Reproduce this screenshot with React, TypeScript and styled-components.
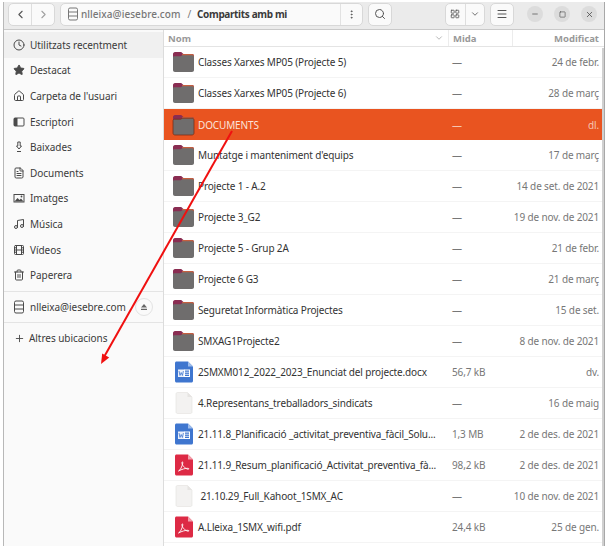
import styled, { createGlobalStyle } from "styled-components";
import {
  ChevronDown, ChevronLeft, ChevronRight, Clock, EllipsisVertical, FileText, Film, Home,
  LayoutGrid, Menu, Minus, Music, Plus, Search, Square, Star, Trash2, X,
} from "lucide-react";

const GlobalStyle = createGlobalStyle`
  html, body { margin: 0; padding: 0; background: #fff; }
  * { box-sizing: border-box; }
`;

const Page = styled.div`
  position: relative;
  width: 606px;
  height: 546px;
  overflow: hidden;
  padding: 2px 1px 0 3px;
  background: #fff;
  font-family: "Noto Sans", "Open Sans", sans-serif;
  font-size: 10px;
  letter-spacing: -0.14px;
  color: #333;
`;

const Win = styled.div`
  display: flex;
  flex-direction: column;
  height: 100%;
  border-left: 1px solid #b8b8b8;
  border-right: 1px solid #a8a8a8;
`;

const HeaderBar = styled.header`
  display: flex;
  align-items: center;
  height: 28px;
  flex-shrink: 0;
  padding: 0 0 3px 4px;
  gap: 5px;
  background: #ebebeb;
  border-bottom: 1px solid #c9c9c9;
`;

const ButtonGroup = styled.div<{ $w: number }>`
  display: flex;
  width: ${(p) => p.$w}px;
  height: 23px;
  flex-shrink: 0;
  background: #fafafa;
  border: 1px solid #d8d8d8;
  border-radius: 5px;
`;

const ToolButton = styled.div<{ $divider?: boolean; $muted?: boolean }>`
  flex: 1;
  display: flex;
  align-items: center;
  justify-content: center;
  color: ${(p) => (p.$muted ? "#a0a0a0" : "#555")};
  border-left: ${(p) => (p.$divider ? "1px solid #dedede" : "none")};
`;

const PathBar = styled.div`
  display: flex;
  align-items: center;
  width: 303px;
  height: 23px;
  flex-shrink: 0;
  background: #fafafa;
  border: 1px solid #d8d8d8;
  border-radius: 5px;
  padding-left: 6px;
`;

const Crumb = styled.span<{ $strong?: boolean }>`
  margin-left: ${(p) => (p.$strong ? "0" : "2px")};
  font-weight: ${(p) => (p.$strong ? 700 : 500)};
  color: ${(p) => (p.$strong ? "#3a3a3a" : "#777")};
  white-space: nowrap;
  font-size: 10px;
  letter-spacing: ${(p) => (p.$strong ? "-0.35px" : "0.05px")};
`;

const CrumbSep = styled.span`
  margin: 0 6px 0 7px;
  color: #777;
`;

const PathMenu = styled.div`
  margin-left: auto;
  width: 22px;
  height: 100%;
  display: flex;
  align-items: center;
  justify-content: center;
  color: #555;
  border-left: 1px solid #e2e2e2;
`;

const Spacer = styled.div`
  flex: 1;
`;

const WindowControls = styled.div`
  display: flex;
  gap: 11px;
  margin-right: 7px;
  margin-left: 8px;
`;

const WindowButton = styled.div`
  width: 16px;
  height: 16px;
  border-radius: 50%;
  background: #dcdcdc;
  color: #444;
  display: flex;
  align-items: center;
  justify-content: center;
`;

const Body = styled.div`
  flex: 1;
  display: flex;
  min-height: 0;
`;

const Sidebar = styled.aside`
  width: 160px;
  flex-shrink: 0;
  background: #fafafa;
  border-right: 1px solid #dcdcdc;
  padding-top: 2px;
`;

const SideItem = styled.div<{ $active?: boolean }>`
  display: flex;
  align-items: center;
  height: 25.6px;
  gap: 5px;
  padding-left: 9px;
  background: ${(p) => (p.$active ? "#f0f0f0" : "transparent")};
  color: #3a3a3a;
  font-size: 10px;
  letter-spacing: -0.05px;
  svg { flex-shrink: 0; color: #4a4a4a; }
`;

const SideDivider = styled.div<{ $top?: number }>`
  height: 1px;
  background: #e4e4e4;
  margin-top: ${(p) => p.$top ?? 0}px;
`;

const MountItem = styled(SideItem)`
  height: 30px;
`;

const PlainItem = styled(SideItem)`
  height: 31px;
  padding-left: 10px;
  gap: 4px;
`;

const EjectButton = styled.div`
  width: 18px;
  height: 18px;
  margin-left: auto;
  margin-right: 10px;
  border: 1px solid #e3e3e3;
  border-radius: 50%;
  display: flex;
  align-items: center;
  justify-content: center;
`;

const Main = styled.main`
  flex: 1;
  min-width: 0;
  background: #fff;
  position: relative;
`;

const ColumnHeader = styled.div`
  display: grid;
  grid-template-columns: 284px 64px 1fr;
  height: 17px;
  align-items: center;
  border-bottom: 1px solid #e4e4e4;
  color: #999;
  font-weight: 700;
  font-size: 9.5px;
  letter-spacing: 0;
`;

const ColumnCell = styled.div<{ $right?: boolean }>`
  display: flex;
  align-items: center;
  height: 100%;
  padding: 0 ${(p) => (p.$right ? "5px" : "4px")};
  justify-content: ${(p) => (p.$right ? "flex-end" : "space-between")};
  border-left: 1px solid #ececec;
  &:first-child { border-left: none; }
`;

const Row = styled.div<{ $selected?: boolean }>`
  display: grid;
  grid-template-columns: 284px 64px 1fr;
  height: 31px;
  align-items: center;
  background: ${(p) => (p.$selected ? "#e95420" : "#fff")};
  color: ${(p) => (p.$selected ? "#fbe3d9" : "#333")};
  border-bottom: ${(p) => (p.$selected ? "none" : "1px solid #f4f4f4")};
`;

const NameCell = styled.div`
  display: flex;
  align-items: center;
  gap: 3px;
  padding-left: 8px;
  min-width: 0;
  white-space: pre;
  overflow: hidden;
  svg { flex-shrink: 0; }
`;

const SizeCell = styled.div<{ $selected?: boolean }>`
  padding-left: 4px;
  color: ${(p) => (p.$selected ? "#f6c4b0" : "#777")};
`;

const DateCell = styled.div<{ $selected?: boolean }>`
  text-align: right;
  padding-right: 5px;
  color: ${(p) => (p.$selected ? "#f6c4b0" : "#777")};
  white-space: nowrap;
`;

const ScrollThumb = styled.div`
  position: absolute;
  right: 0;
  top: 18px;
  width: 2px;
  height: 500px;
  background: #d0d0d0;
`;

const ArrowOverlay = styled.svg`
  position: absolute;
  left: 0;
  top: 0;
  pointer-events: none;
`;

const FolderIcon = ({ selected }: { selected?: boolean }) => (
  <svg width="23" height="22" viewBox="0 0 23 22">
    <path d="M1 5V3.200C1 2 1.800 1 3 1h5.500c1 0 1.600.6 2.400 1.500l.6.5H20c1.200 0 2 .8 2 2v2H1z" fill="#8a2d52" />
    <path d="M10 3h10c1.200 0 2 .8 2 2v2H11z" fill="#c65f3f" />
    <path d="M1 6.500c0-.8.6-1.300 1.300-1.300H8c1 0 1.500-.3 2-1h10c1.200 0 2 .7 2 1.800V19c0 1.200-.8 2-2 2H3c-1.200 0-2-.8-2-2z" fill="#6f6d6d" stroke={selected ? "#7a2e16" : "none"} strokeWidth="0.8" />
  </svg>
);

const WordIcon = () => (
  <svg width="23" height="22" viewBox="0 0 23 22">
    <path d="M4.500 .5h11.500l5 5V20c0 .9-.7 1.500-1.500 1.500h-15C3.700 21.500 3 20.900 3 20V2C3 1.200 3.700.5 4.500.5z" fill="#3f76cf" />
    <path d="M16 .5l5 5h-5z" fill="#9dbcec" />
    <rect x="6" y="8.500" width="6.500" height="7.500" fill="#fff" opacity="0.9" />
    <rect x="12.500" y="9" width="5" height="6.500" fill="none" stroke="#fff" strokeWidth="1" />
    <path d="M12.500 11.200h5M12.500 13.300h5" stroke="#fff" strokeWidth="0.8" />
    <path d="M7 10l1 4.500 1.200-3 1.200 3 1-4.500" fill="none" stroke="#3f76cf" strokeWidth="0.8" />
  </svg>
);

const PdfIcon = () => (
  <svg width="23" height="22" viewBox="0 0 23 22">
    <path d="M4.500 .5h11.500l5 5V20c0 .9-.7 1.500-1.500 1.500h-15C3.700 21.500 3 20.900 3 20V2C3 1.200 3.700.5 4.500.5z" fill="#dd2a45" />
    <path d="M16 .5l5 5h-5z" fill="#f2a0ac" />
    <path d="M6.500 17c1.800-1 3.500-4 4.300-8 .3-1.400-.9-1.500-.9-.3 0 2.300 2.600 5.600 6 6.500 1.300.3 1.300-.9 0-.9-2.600-.1-6 .9-9.400 2.700z" fill="none" stroke="#fff" strokeWidth="0.9" />
  </svg>
);

const BlankIcon = () => (
  <svg width="23" height="22" viewBox="0 0 23 22">
    <path d="M5.500 .5h10l4.500 4.500V20c0 .8-.6 1.500-1.500 1.500H5.500C4.700 21.500 4 20.800 4 20V2C4 1.200 4.700.5 5.500.5z" fill="#f3f2f1" stroke="#e2e0de" strokeWidth="0.6" />
    <path d="M15.500 .5l4.500 4.500h-4.500z" fill="#e6e4e2" />
  </svg>
);

const DesktopIcon = () => (
  <svg width="12" height="12" viewBox="0 0 12 12">
    <rect x="1" y="2" width="10" height="8" rx="1" fill="none" stroke="#4a4a4a" />
    <rect x="1" y="2" width="3.500" height="8" fill="#4a4a4a" />
  </svg>
);

const DownloadIcon = () => (
  <svg width="12" height="12" viewBox="0 0 12 12" fill="none" stroke="#4a4a4a">
    <path d="M4.800 1h2.400v4h1.300L6 8 3.500 5h1.300z" />
    <path d="M4 10.500h4" />
  </svg>
);

const PictureIcon = () => (
  <svg width="12" height="12" viewBox="0 0 12 12">
    <rect x="0.500" y="2" width="11" height="8.500" fill="#4a4a4a" />
    <rect x="1.500" y="3" width="9" height="6.500" fill="#fafafa" />
    <path d="M1.500 9.500l3-3.500 2 2 1.500-1.500 2.500 3z" fill="#4a4a4a" />
    <circle cx="8.500" cy="4.500" r="0.900" fill="#4a4a4a" />
  </svg>
);

type Kind = "folder" | "word" | "pdf" | "blank";

interface FileRow {
  name: string;
  size: string;
  date: string;
  kind: Kind;
  selected?: boolean;
}

const files: FileRow[] = [
  { name: "Classes Xarxes MP05 (Projecte 5)", size: "—", date: "24 de febr.", kind: "folder" },
  { name: "Classes Xarxes MP05 (Projecte 6)", size: "—", date: "28 de març", kind: "folder" },
  { name: "DOCUMENTS", size: "—", date: "dl.", kind: "folder", selected: true },
  { name: "Muntatge i manteniment d'equips", size: "—", date: "17 de març", kind: "folder" },
  { name: "Projecte 1 - A.2", size: "—", date: "14 de set. de 2021", kind: "folder" },
  { name: "Projecte 3_G2", size: "—", date: "19 de nov. de 2021", kind: "folder" },
  { name: "Projecte 5 - Grup 2A", size: "—", date: "21 de febr.", kind: "folder" },
  { name: "Projecte 6 G3", size: "—", date: "21 de març", kind: "folder" },
  { name: "Seguretat Informàtica Projectes", size: "—", date: "15 de set.", kind: "folder" },
  { name: "SMXAG1Projecte2", size: "—", date: "8 de nov. de 2021", kind: "folder" },
  { name: "2SMXM012_2022_2023_Enunciat del projecte.docx", size: "56,7 kB", date: "dv.", kind: "word" },
  { name: "4.Representans_treballadors_sindicats", size: "—", date: "16 de maig", kind: "blank" },
  { name: "21.11.8_Planificació _activitat_preventiva_fàcil_Solu...", size: "1,3 MB", date: "2 de des. de 2021", kind: "word" },
  { name: "21.11.9_Resum_planificació_Activitat_preventiva_fà...", size: "98,2 kB", date: "2 de des. de 2021", kind: "pdf" },
  { name: " 21.10.29_Full_Kahoot_1SMX_AC", size: "—", date: "10 de nov. de 2021", kind: "blank" },
  { name: "A.Lleixa_1SMX_wifi.pdf", size: "24,4 kB", date: "25 de gen.", kind: "pdf" },
];

const places = [
  { label: "Destacat", icon: <Star size={12} fill="#4a4a4a" /> },
  { label: "Carpeta de l'usuari", icon: <Home size={12} /> },
  { label: "Escriptori", icon: <DesktopIcon /> },
  { label: "Baixades", icon: <DownloadIcon /> },
  { label: "Documents", icon: <FileText size={12} /> },
  { label: "Imatges", icon: <PictureIcon /> },
  { label: "Música", icon: <Music size={12} /> },
  { label: "Vídeos", icon: <Film size={12} /> },
  { label: "Paperera", icon: <Trash2 size={12} /> },
];

const ServerIcon = ({ color }: { color: string }) => (
  <svg width="12" height="14" viewBox="0 0 12 14" fill="none" stroke={color} strokeWidth="1">
    <rect x="1.500" y="1" width="9" height="12" rx="1.500" />
    <path d="M1.500 5h9M1.500 9h9" />
  </svg>
);

const fileIcon = (f: FileRow) => {
  if (f.kind === "folder") return <FolderIcon selected={f.selected} />;
  if (f.kind === "word") return <WordIcon />;
  if (f.kind === "pdf") return <PdfIcon />;
  return <BlankIcon />;
};

export default function App() {
  return (
    <>
      <GlobalStyle />
      <Page>
        <Win>
          <HeaderBar>
            <ButtonGroup $w={47}>
              <ToolButton><ChevronLeft size={13} /></ToolButton>
              <ToolButton $divider $muted><ChevronRight size={13} /></ToolButton>
            </ButtonGroup>
            <PathBar>
              <ServerIcon color="#777" />
              <Crumb>nlleixa@iesebre.com</Crumb>
              <CrumbSep>/</CrumbSep>
              <Crumb $strong>Compartits amb mi</Crumb>
              <PathMenu><EllipsisVertical size={11} /></PathMenu>
            </PathBar>
            <ButtonGroup $w={24}>
              <ToolButton><Search size={12} /></ToolButton>
            </ButtonGroup>
            <Spacer />
            <ButtonGroup $w={40}>
              <ToolButton><LayoutGrid size={10} /></ToolButton>
              <ToolButton $divider><ChevronDown size={10} /></ToolButton>
            </ButtonGroup>
            <ButtonGroup $w={24}>
              <ToolButton><Menu size={12} /></ToolButton>
            </ButtonGroup>
            <WindowControls>
              <WindowButton><Minus size={8} /></WindowButton>
              <WindowButton><Square size={7} /></WindowButton>
              <WindowButton><X size={9} /></WindowButton>
            </WindowControls>
          </HeaderBar>
          <Body>
            <Sidebar>
              <SideItem $active><Clock size={12} />Utilitzats recentment</SideItem>
              {places.map((p) => (
                <SideItem key={p.label}>{p.icon}{p.label}</SideItem>
              ))}
              <SideDivider $top={3} />
              <MountItem>
                <ServerIcon color="#4a4a4a" />
                nlleixa@iesebre.com
                <EjectButton>
                  <svg width="8" height="8" viewBox="0 0 8 8" fill="#666">
                    <path d="M4 1l3 3.500H1zM1 5.800h6V7H1z" />
                  </svg>
                </EjectButton>
              </MountItem>
              <SideDivider />
              <PlainItem><Plus size={11} />Altres ubicacions</PlainItem>
            </Sidebar>
            <Main>
              <ColumnHeader>
                <ColumnCell>Nom<ChevronDown size={10} color="#aaa" /></ColumnCell>
                <ColumnCell>Mida</ColumnCell>
                <ColumnCell $right>Modificat</ColumnCell>
              </ColumnHeader>
              {files.map((f) => (
                <Row key={f.name} $selected={f.selected}>
                  <NameCell>{fileIcon(f)}{f.name}</NameCell>
                  <SizeCell $selected={f.selected}>{f.size}</SizeCell>
                  <DateCell $selected={f.selected}>{f.date}</DateCell>
                </Row>
              ))}
              <ScrollThumb />
            </Main>
          </Body>
        </Win>
        <ArrowOverlay width="606" height="546" viewBox="0 0 606 546">
          <line x1="232" y1="131" x2="104" y2="357" stroke="#f01010" strokeWidth="2" />
          <path d="M101 364l1.200-10.500 7 4z" fill="#f01010" />
        </ArrowOverlay>
      </Page>
    </>
  );
}
